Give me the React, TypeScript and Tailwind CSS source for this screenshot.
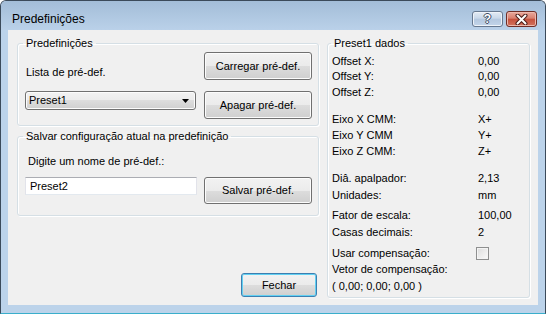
import React from 'react';

/* ─── Win7 bits ───────────────────────────────────────────────────── */

const btn =
  'flex items-center justify-center rounded-[3px] border border-[#707070] bg-[linear-gradient(#f2f2f2_0%,#ebebeb_50%,#dddddd_50%,#cfcfcf_100%)] shadow-[inset_0_0_0_1px_#fcfcfc] text-[11px] text-black';

const group =
  'rounded-[3px] border border-[#d5dfe5] shadow-[inset_1px_1px_0_#ffffff,1px_1px_0_#ffffff]';

const legend = 'text-[11px] leading-[15px] text-black';

type Row = { label: string; value?: string; check?: boolean; mt: string };

const rows: Row[] = [
  { label: 'Offset X:', value: '0,00', mt: '' },
  { label: 'Offset Y:', value: '0,00', mt: '-mt-px' },
  { label: 'Offset Z:', value: '0,00', mt: '' },
  { label: 'Eixo X CMM:', value: 'X+', mt: 'mt-[11px]' },
  { label: 'Eixo Y CMM', value: 'Y+', mt: '' },
  { label: 'Eixo Z CMM:', value: 'Z+', mt: '' },
  { label: 'Diâ. apalpador:', value: '2,13', mt: 'mt-[11px]' },
  { label: 'Unidades:', value: 'mm', mt: 'mt-px' },
  { label: 'Fator de escala:', value: '100,00', mt: 'mt-[4px]' },
  { label: 'Casas decimais:', value: '2', mt: 'mt-px' },
  { label: 'Usar compensação:', check: true, mt: 'mt-[5px]' },
  { label: 'Vetor de compensação:', mt: '' },
  { label: '( 0,00; 0,00; 0,00 )', mt: 'mt-px' },
];

export default function App() {
  return (
    <div className="w-[546px] h-[314px] font-['Liberation_Sans',Arial,sans-serif]">
      <div className="flex flex-col w-full h-full rounded-t-[6px] border border-[#3b4a5a] border-b-[#3aaecb] bg-[#bcd3ea] overflow-hidden">
        {/* Title bar */}
        <div className="flex items-start h-[29px] pl-[11px] pr-[8px] bg-linear-to-b from-[#a3bdd8] to-[#bad1e9]">
          <span className="mt-[11px] text-[12px] leading-[14px] text-black">Predefinições</span>
          <div className="ml-auto mt-[10px] flex gap-[3px]">
            <div className="flex items-center justify-center w-[31px] h-[16px] rounded-[3px] border border-[#66788f] bg-[linear-gradient(#e3ebf4_0%,#c9d8e9_45%,#b4c8df_50%,#c3d5ea_100%)] shadow-[inset_0_0_0_1px_#eef3f9]">
              <span className="text-[12px] font-bold leading-[14px] text-white [text-shadow:1px_0_#3d4d62,-1px_0_#3d4d62,0_1px_#3d4d62,0_-1px_#3d4d62]">?</span>
            </div>
            <div className="flex items-center justify-center w-[31px] h-[16px] rounded-[3px] border border-[#6f2d26] bg-[linear-gradient(#e9a99c_0%,#d9806f_45%,#c5503c_50%,#d2735f_100%)] shadow-[inset_0_0_0_1px_#ecb8ad]">
              <svg width="13" height="11" viewBox="0 0 13 11">
                <path d="M2.5 1.5 L10.5 9.5 M10.5 1.5 L2.5 9.5" stroke="#4a1c17" strokeWidth="4" strokeLinecap="round" />
                <path d="M2.5 1.5 L10.5 9.5 M10.5 1.5 L2.5 9.5" stroke="#ffffff" strokeWidth="2" strokeLinecap="round" />
              </svg>
            </div>
          </div>
        </div>

        {/* Client area */}
        <div className="mx-[7px] h-[275px] bg-[#f0f0f0] flex pl-[9px] pt-[6px] pr-[8px] gap-[8px] text-[11px] text-black">
          {/* Left column */}
          <div className="w-[302px] flex flex-col">
            <fieldset className={`${group} h-[90px] pl-[7px] pr-[6px] pt-[1px]`}>
              <legend className={`${legend} -ml-[2px] px-[3px]`}>Predefinições</legend>
              <div className="flex justify-between items-start">
                <span className="ml-px mt-[13px] leading-[15px]">Lista de pré-def.</span>
                <button className={`${btn} w-[108px] h-[28px]`}>Carregar pré-def.</button>
              </div>
              <div className="flex justify-between items-start mt-[11px]">
                <div className={`${btn} !justify-between w-[171px] h-[19px] pl-[3px] pr-[6px]`}>
                  <span>Preset1</span>
                  <svg width="7" height="4" viewBox="0 0 7 4">
                    <path d="M0 0 H7 L3.5 4 Z" fill="#000" />
                  </svg>
                </div>
                <button className={`${btn} w-[108px] h-[28px]`}>Apagar pré-def.</button>
              </div>
            </fieldset>

            <fieldset className={`${group} h-[87px] mt-[3px] pl-[7px] pr-[6px] pt-[10px]`}>
              <legend className={`${legend} -ml-[2px] px-[3px]`}>Salvar configuração atual na predefinição</legend>
              <div className="ml-[3px] leading-[15px]">Digite um nome de pré-def.:</div>
              <div className="flex justify-between items-start mt-[8px]">
                <div className="w-[172px] h-[18px] border border-[#abadb3] border-x-[#e2e3ea] border-b-[#e3e9ef] bg-white pl-[4px] leading-[16px]">
                  Preset2
                </div>
                <button className={`${btn} w-[108px] h-[27px]`}>Salvar pré-def.</button>
              </div>
            </fieldset>

            <div className="flex justify-end mt-[57px] pr-[2px]">
              <button className="flex items-center justify-center w-[76px] h-[24px] rounded-[3px] border border-[#3c7fb1] bg-[linear-gradient(#f2f2f2_0%,#ebebeb_50%,#dddddd_50%,#cfcfcf_100%)] shadow-[inset_0_0_0_1px_#62d0f2] text-[11px] text-black">
                Fechar
              </button>
            </div>
          </div>

          {/* Right group */}
          <fieldset className={`${group} w-[203px] h-[262px] pl-[4px] pt-[2px]`}>
            <legend className={`${legend} -ml-px px-[3px]`}>Preset1 dados</legend>
            {rows.map((r, i) => (
              <div key={i} className={`flex items-center h-[16px] leading-[16px] whitespace-nowrap ${r.mt}`}>
                <span className={r.value || r.check ? 'w-[146px]' : ''}>{r.label}</span>
                {r.value && <span>{r.value}</span>}
                {r.check && (
                  <span className="-ml-[2px] w-[13px] h-[13px] border border-[#8e8f8f] bg-linear-to-br from-[#dcdcdc] to-[#fbfbfb] shadow-[inset_0_0_0_1px_#f4f4f4]" />
                )}
              </div>
            ))}
          </fieldset>
        </div>
      </div>
    </div>
  );
}
